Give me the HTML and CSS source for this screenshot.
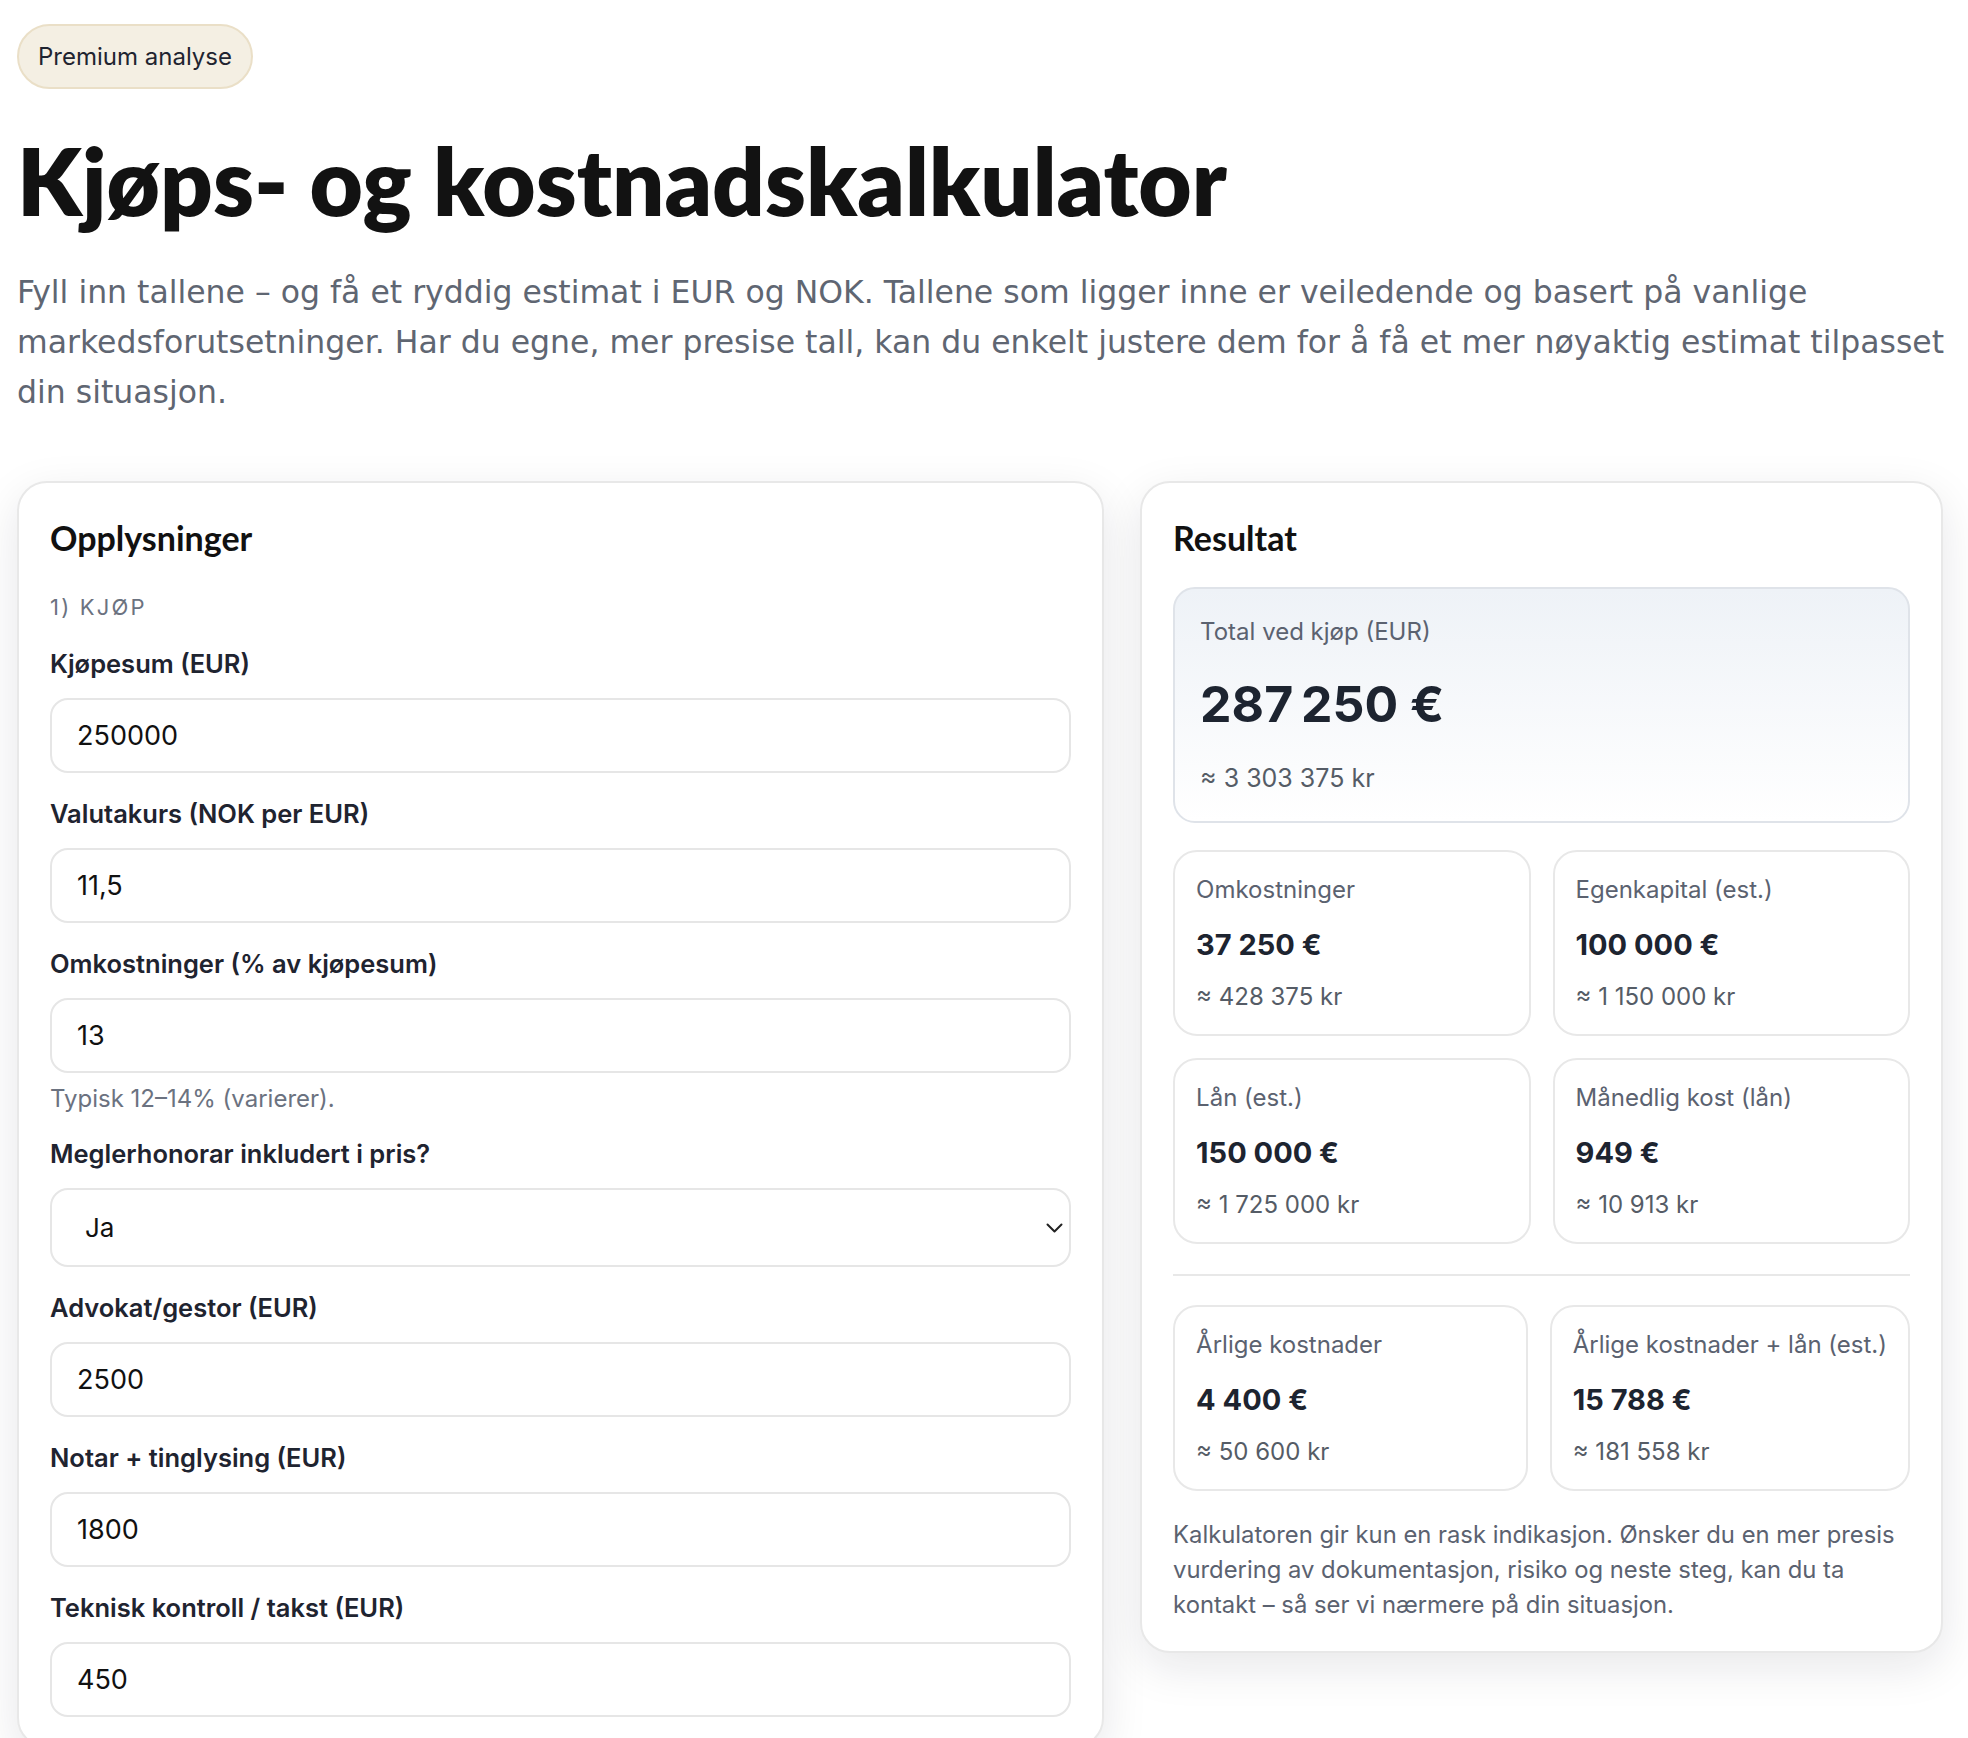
FILE: index.html
```html
<!DOCTYPE html>
<html lang="no">
<head>
<meta charset="utf-8">
<title>Kjøps- og kostnadskalkulator</title>
<link rel="stylesheet" href="styles.css">
</head>
<body>
<div class="page">
  <div class="badge">Premium analyse</div>
  <h1 class="title">Kjøps- og kostnadskalkulator</h1>
  <p class="intro">Fyll inn tallene – og få et ryddig estimat i EUR og NOK. Tallene som ligger inne er veiledende og basert på vanlige markedsforutsetninger. Har du egne, mer presise tall, kan du enkelt justere dem for å få et mer nøyaktig estimat tilpasset din situasjon.</p>

  <div class="layout">
    <section class="card">
      <h2 class="card-title">Opplysninger</h2>
      <div class="step">1) KJØP</div>

      <div class="field">
        <label class="field-label" for="f1">Kjøpesum (EUR)</label>
        <input class="input" id="f1" type="text" value="250000">
      </div>
      <div class="field">
        <label class="field-label" for="f2">Valutakurs (NOK per EUR)</label>
        <input class="input" id="f2" type="text" value="11,5">
      </div>
      <div class="field">
        <label class="field-label" for="f3">Omkostninger (% av kjøpesum)</label>
        <input class="input" id="f3" type="text" value="13">
        <div class="hint">Typisk 12–14% (varierer).</div>
      </div>
      <div class="field">
        <label class="field-label" for="f4">Meglerhonorar inkludert i pris?</label>
        <div class="select-wrap">
          <select class="select" id="f4">
            <option>Ja</option>
            <option>Nei</option>
          </select>
          <svg class="chevron" width="17" height="10" viewBox="0 0 17 10" aria-hidden="true"><path d="M1.5 1.5 L8.5 8.5 L15.5 1.5" fill="none" stroke="#222" stroke-width="2" stroke-linecap="round" stroke-linejoin="round"/></svg>
        </div>
      </div>
      <div class="field">
        <label class="field-label" for="f5">Advokat/gestor (EUR)</label>
        <input class="input" id="f5" type="text" value="2500">
      </div>
      <div class="field">
        <label class="field-label" for="f6">Notar + tinglysing (EUR)</label>
        <input class="input" id="f6" type="text" value="1800">
      </div>
      <div class="field">
        <label class="field-label" for="f7">Teknisk kontroll / takst (EUR)</label>
        <input class="input" id="f7" type="text" value="450">
      </div>
    </section>

    <section class="card">
      <h2 class="card-title">Resultat</h2>
      <div class="total">
        <div class="total-label">Total ved kjøp (EUR)</div>
        <div class="total-value">287&#8239;250&nbsp;€</div>
        <div class="total-sub">≈ 3&nbsp;303&nbsp;375&nbsp;kr</div>
      </div>

      <div class="metrics">
        <div class="metric">
          <div class="metric-label">Omkostninger</div>
          <div class="metric-value">37&nbsp;250&nbsp;€</div>
          <div class="metric-sub">≈ 428&nbsp;375&nbsp;kr</div>
        </div>
        <div class="metric">
          <div class="metric-label">Egenkapital (est.)</div>
          <div class="metric-value">100&nbsp;000&nbsp;€</div>
          <div class="metric-sub">≈ 1&nbsp;150&nbsp;000&nbsp;kr</div>
        </div>
        <div class="metric">
          <div class="metric-label">Lån (est.)</div>
          <div class="metric-value">150&nbsp;000&nbsp;€</div>
          <div class="metric-sub">≈ 1&nbsp;725&nbsp;000&nbsp;kr</div>
        </div>
        <div class="metric">
          <div class="metric-label">Månedlig kost (lån)</div>
          <div class="metric-value">949&nbsp;€</div>
          <div class="metric-sub">≈ 10&nbsp;913&nbsp;kr</div>
        </div>
      </div>

      <hr class="divider">

      <div class="metrics">
        <div class="metric">
          <div class="metric-label">Årlige kostnader</div>
          <div class="metric-value">4&nbsp;400&nbsp;€</div>
          <div class="metric-sub">≈ 50&nbsp;600&nbsp;kr</div>
        </div>
        <div class="metric">
          <div class="metric-label">Årlige kostnader + lån (est.)</div>
          <div class="metric-value">15&nbsp;788&nbsp;€</div>
          <div class="metric-sub">≈ 181&nbsp;558&nbsp;kr</div>
        </div>
      </div>

      <p class="note">Kalkulatoren gir kun en rask indikasjon. Ønsker du en mer presis vurdering av dokumentasjon, risiko og neste steg, kan du ta kontakt – så ser vi nærmere på din situasjon.</p>
    </section>
  </div>
</div>
</body>
</html>
```

FILE: styles.css
```css
html { overflow: hidden; }
* { box-sizing: border-box; }
body {
  margin: 0;
  background: #ffffff;
  font-family: "Inter", "Liberation Sans", sans-serif;
  color: #1f2430;
}
.page {
  padding: 24px 0 0 17px;
  width: 1943px;
}
.badge {
  display: flex;
  align-items: center;
  width: fit-content;
  height: 65px;
  padding: 0 19px;
  border: 2px solid #eadfc7;
  border-radius: 999px;
  background: #f4efe3;
  font-size: 24px;
  color: #1f2430;
}
.title {
  margin: 41px 0 0;
  font-family: "Lato", "Liberation Sans", sans-serif;
  font-weight: 800;
  font-size: 92px;
  line-height: 1.1;
  color: #121212;
}
.intro {
  margin: 36px 0 0;
  width: 1950px;
  font-family: "DejaVu Sans", "Liberation Sans", sans-serif;
  font-size: 31.5px;
  line-height: 50px;
  color: #5f6672;
}
.layout {
  margin-top: 64px;
  width: 1926px;
  display: grid;
  grid-template-columns: minmax(0, 1.354fr) minmax(0, 1fr);
  gap: 36px;
  align-items: start;
}
.card {
  background: #ffffff;
  border: 2px solid #e8e8e8;
  border-radius: 30px;
  padding: 30px 31px 29px;
  box-shadow: 0 14px 46px rgba(17, 24, 39, 0.1);
}
.card-title {
  margin: 5px 0 0;
  font-family: "Lato", "Liberation Sans", sans-serif;
  font-weight: 700;
  font-size: 34px;
  line-height: 40px;
  color: #111111;
}
.step {
  margin: 35px 0 28px;
  font-size: 22px;
  line-height: 28px;
  letter-spacing: 0.1em;
  color: #6b7280;
}
.field { margin-bottom: 26px; }
.field:last-child { margin-bottom: 0; }
.field-label {
  display: block;
  margin-bottom: 20px;
  font-weight: 600;
  font-size: 25.5px;
  line-height: 29px;
  color: #1f2430;
}
.input, .select {
  display: block;
  width: 100%;
  height: 75px;
  padding: 0 25px;
  border: 2px solid #e6e6e6;
  border-radius: 18px;
  background: #ffffff;
  font-family: "Inter", "Liberation Sans", sans-serif;
  font-size: 27px;
  color: #111111;
  outline: none;
}
.hint {
  margin-top: 12px;
  font-size: 24px;
  line-height: 28px;
  color: #6b7280;
}
.select-wrap { position: relative; }
.select {
  -webkit-appearance: none;
  appearance: none;
  height: 79px;
  padding: 0 33px;
  font-size: 26px;
}
.chevron {
  position: absolute;
  right: 8px;
  top: 50%;
  transform: translateY(-50%);
  pointer-events: none;
}
.total {
  margin-top: 29px;
  border: 2px solid #dfe3e9;
  border-radius: 22px;
  padding: 28px 25px;
  background: linear-gradient(180deg, #eef2f7 0%, #ffffff 100%);
}
.total-label {
  font-size: 24px;
  line-height: 30px;
  color: #5b6270;
}
.total-value {
  margin-top: 26px;
  font-weight: 700;
  font-size: 50px;
  line-height: 62px;
  color: #1d2430;
}
.total-sub {
  margin-top: 28px;
  font-size: 25px;
  line-height: 30px;
  color: #555c66;
}
.metrics {
  margin-top: 27px;
  display: grid;
  grid-template-columns: 1fr 1fr;
  gap: 22px;
}
.metric {
  border: 2px solid #e8e8e8;
  border-radius: 24px;
  padding: 23px 21px 22px;
  background: #ffffff;
}
.metric-label {
  font-size: 24px;
  line-height: 30px;
  color: #5b6270;
  white-space: nowrap;
}
.metric-value {
  margin-top: 22px;
  font-weight: 700;
  font-size: 29px;
  line-height: 36px;
  color: #1d2430;
}
.metric-sub {
  margin-top: 19px;
  font-size: 24px;
  line-height: 30px;
  color: #555c66;
}
.divider {
  margin: 30px 0 0;
  border: 0;
  height: 2px;
  background: #e8e8e8;
}
.divider + .metrics { margin-top: 29px; }
.note {
  margin: 26px 0 0;
  font-size: 23.8px;
  line-height: 35px;
  color: #5b6270;
}
```
